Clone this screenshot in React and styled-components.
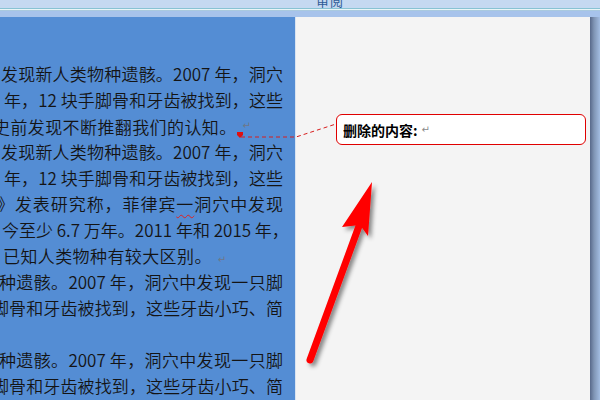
import styled, { createGlobalStyle } from "styled-components";

const Global = createGlobalStyle`
	html, body {
		margin: 0;
		padding: 0;
		background: #ffffff;
	}
	body {
		font-family: "Noto Sans CJK SC", sans-serif;
	}
`;

const Screen = styled.div`
	position: relative;
	width: 600px;
	height: 400px;
	overflow: hidden;
	display: flex;
	flex-direction: column;
`;

const TitleBar = styled.div`
	height: 8px;
	flex-shrink: 0;
	background: #c5d9f1;
	overflow: hidden;
	display: flex;
	align-items: flex-end;
	padding-left: 316px;
	> span {
		font-family: "Noto Sans CJK SC", sans-serif;
		font-size: 13px;
		line-height: 14px;
		color: #2f5b96;
		letter-spacing: 1px;
	}
`;

const Rule = styled.div`
	height: 1px;
	flex-shrink: 0;
	background: ${(p) => p.$color};
`;

const Band = styled.div`
	height: 6px;
	flex-shrink: 0;
	background: #a7c3eb;
`;

const Workspace = styled.div`
	flex: 1;
	display: flex;
	min-height: 0;
`;

const DocPane = styled.div`
	width: 295px;
	flex-shrink: 0;
	background: #548dd4;
	overflow: hidden;
	padding-top: 44px;
	box-sizing: border-box;
	color: #141414;
	font-weight: 350;
`;

const Line = styled.div`
	width: 283px;
	height: 26px;
	line-height: 26px;
	font-size: 17px;
	white-space: nowrap;
	text-indent: ${(p) => p.$indent || 0}px;
	letter-spacing: ${(p) => (p.$justify ? 0 : 0.4)}px;
	text-align: left;
	text-align-last: ${(p) => (p.$justify ? "justify" : "left")};
`;

const Mark = styled.span`
	font-family: "DejaVu Sans", sans-serif;
	font-size: 10px;
	font-weight: 400;
	color: ${(p) => p.$color || "#6f7787"};
	letter-spacing: 0;
	margin-left: ${(p) => p.$gap || 4}px;
	vertical-align: ${(p) => p.$raise || 0}px;
`;

const Squiggle = styled.span`
	text-decoration: underline wavy #e02020;
	text-decoration-thickness: 1px;
	text-underline-offset: 3px;
`;

const MarkupPane = styled.div`
	flex: 1;
	background: #f4f4f4;
	border-left: 1px solid #d9e3f1;
	padding: 97px 0 0 40px;
	box-sizing: border-box;
`;

const Balloon = styled.div`
	width: 250px;
	height: 31px;
	box-sizing: border-box;
	background: #ffffff;
	border: 1px solid #e00000;
	border-radius: 6px;
	padding-left: 6px;
	display: flex;
	align-items: center;
	font-family: "Noto Sans CJK SC", sans-serif;
	font-size: 14px;
	font-weight: 700;
	color: #000000;
`;

const EdgeShadow = styled.div`
	width: 10px;
	flex-shrink: 0;
	background: linear-gradient(to right, #58698a, #7f94b4 40%, #a3bde2);
`;

const Overlay = styled.svg`
	position: absolute;
	left: 0;
	top: 0;
	width: 600px;
	height: 400px;
	pointer-events: none;
`;

const lines = [
	{ text: "发现新人类物种遗骸。2007 年，洞穴", indent: 1, justify: true },
	{ text: "年，12 块手脚骨和牙齿被找到，这些", indent: 4, justify: true },
	{ text: "史前发现不断推翻我们的认知。", indent: -7, mark: { gap: 6, raise: 5 } },
	{ text: "发现新人类物种遗骸。2007 年，洞穴", indent: 1, justify: true },
	{ text: "年，12 块手脚骨和牙齿被找到，这些", indent: 4, justify: true },
	{ squiggle: true, indent: -3, justify: true },
	{ text: "今至少 6.7 万年。2011 年和 2015 年，", indent: 2, justify: true },
	{ text: "已知人类物种有较大区别。", indent: 3, mark: { gap: 6, raise: 0 } },
	{ text: "种遗骸。2007 年，洞穴中发现一只脚", indent: -1, justify: true },
	{ text: "脚骨和牙齿被找到，这些牙齿小巧、简", indent: -8, justify: true },
	{ text: "" },
	{ text: "种遗骸。2007 年，洞穴中发现一只脚", indent: -1, justify: true },
	{ text: "脚骨和牙齿被找到，这些牙齿小巧、简", indent: -8, justify: true },
];

export default function App() {
	return (
		<Screen lang="zh-CN">
			<Global />
			<TitleBar>
				<span>审阅</span>
			</TitleBar>
			<Rule $color="#88c3d3" />
			<Rule $color="#e9f5f7" />
			<Rule $color="#a9c9df" />
			<Band />
			<Workspace>
				<DocPane>
					{lines.map((l, i) => (
						<Line key={i} $indent={l.indent} $justify={l.justify}>
							{l.squiggle ? (
								<>
									》发表研究称，菲律宾<Squiggle>一</Squiggle>洞穴中发现
								</>
							) : (
								l.text || "\u00a0"
							)}
							{l.mark && (
								<Mark $gap={l.mark.gap} $raise={l.mark.raise}>
									↵
								</Mark>
							)}
						</Line>
					))}
				</DocPane>
				<MarkupPane>
					<Balloon>
						删除的内容:
						<Mark $gap={4} $color="#8a8a8a">↵</Mark>
					</Balloon>
				</MarkupPane>
				<EdgeShadow />
			</Workspace>
			<Overlay viewBox="0 0 600 400">
				<defs>
					<filter id="arrowShadow" x="-30%" y="-30%" width="160%" height="160%">
						<feDropShadow dx="3" dy="3" stdDeviation="2" floodColor="#000" floodOpacity="0.45" />
					</filter>
				</defs>
				<polyline
					points="241,137 296,137 336,124"
					fill="none"
					stroke="#d81e1e"
					strokeWidth="1"
					strokeDasharray="4 3"
				/>
				<polygon points="237,132 243,132 243,135 240,138 237,135" fill="#e01010" />
				<g filter="url(#arrowShadow)">
					<line x1="310" y1="360" x2="359" y2="226" stroke="#ff0000" strokeWidth="7" strokeLinecap="round" />
					<polygon points="372,182 368,236 360,225 342,227" fill="#ff0000" />
				</g>
			</Overlay>
		</Screen>
	);
}
